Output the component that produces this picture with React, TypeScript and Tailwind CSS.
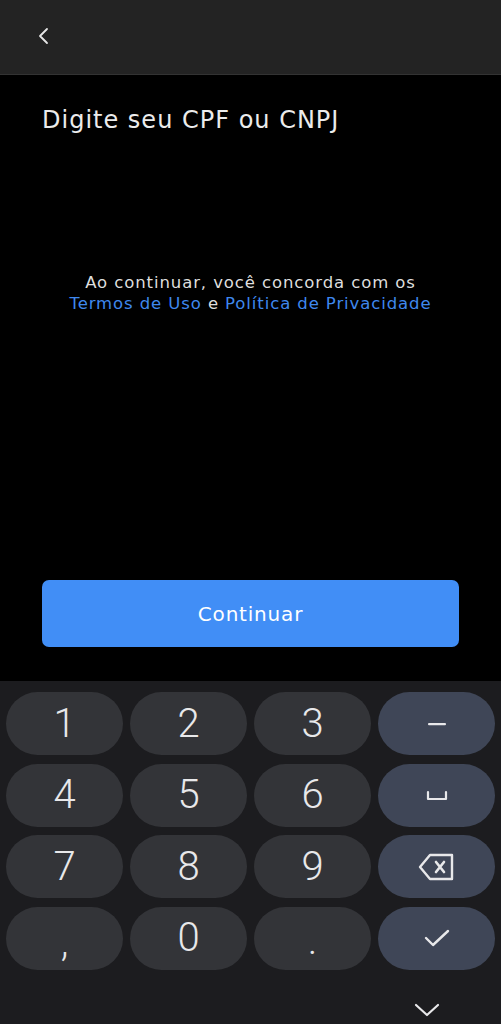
import React from "react";

const Key = ({ children, fn = false }: { children: React.ReactNode; fn?: boolean }) => (
  <div
    className={`h-[63px] rounded-full flex items-center justify-center text-[#e8e8ea] ${
      fn ? "bg-[#3f4657]" : "bg-[#333438]"
    }`}
    style={{ fontFamily: "Roboto, sans-serif" }}
  >
    {children}
  </div>
);

const D = ({ c, extra = "" }: { c: string; extra?: string }) => (
  <span className={`text-[40px] font-light leading-none ${extra}`}>{c}</span>
);

export default function App() {
  return (
    <div className="w-[501px] h-[1024px] flex flex-col bg-black overflow-hidden" style={{ fontFamily: '"DejaVu Sans", sans-serif' }}>
      <header className="h-[75px] shrink-0 bg-[#232323] border-b border-[#333333] flex items-center pl-[36px]">
        <svg width="16" height="20" viewBox="0 0 16 20" fill="none" className="-mt-[2px]">
          <path d="M11 3 L4 10 L11 17" stroke="#e6e6e6" strokeWidth="1.8" strokeLinecap="round" strokeLinejoin="round" />
        </svg>
      </header>
      <main className="flex-1 flex flex-col px-[42px]">
        <h1 className="mt-[29px] text-[24px] leading-[32px] text-[#ececec] tracking-[1px]">Digite seu CPF ou CNPJ</h1>
        <p className="mt-[136px] text-center text-[16.5px] leading-[21px] text-[#dedede] tracking-[0.9px] whitespace-nowrap -mx-[20px]">
          Ao continuar, você concorda com os
          <br />
          <span className="text-[#3f88ee]">Termos de Uso</span> e{" "}
          <span className="text-[#3f88ee]">Política de Privacidade</span>
        </p>
        <button className="mt-[266px] h-[67px] w-full rounded-[7px] bg-[#418ef6] text-white text-[20px] tracking-[0.8px]">
          Continuar
        </button>
      </main>
      <div className="h-[343px] shrink-0 bg-[#1c1c1f] px-[6px] pt-[11px] flex flex-col">
        <div className="grid grid-cols-4 gap-x-[7px] gap-y-[8.5px]">
          <Key><D c="1" /></Key>
          <Key><D c="2" /></Key>
          <Key><D c="3" /></Key>
          <Key fn>
            <svg width="20" height="4" viewBox="0 0 20 4"><rect x="1" y="1" width="18" height="2.2" rx="1" fill="#e8e8ea" /></svg>
          </Key>
          <Key><D c="4" /></Key>
          <Key><D c="5" /></Key>
          <Key><D c="6" /></Key>
          <Key fn>
            <svg width="22" height="12" viewBox="0 0 22 12" fill="none" className="mt-[2px]">
              <path d="M2 2 V9 H20 V2" stroke="#e8e8ea" strokeWidth="2.2" strokeLinejoin="round" strokeLinecap="round" />
            </svg>
          </Key>
          <Key><D c="7" /></Key>
          <Key><D c="8" /></Key>
          <Key><D c="9" /></Key>
          <Key fn>
            <svg width="38" height="30" viewBox="0 0 38 30" fill="none">
              <path d="M12 3 H34 V27 H12 L2 15 Z" stroke="#e8e8ea" strokeWidth="2.4" strokeLinejoin="round" />
              <path d="M18 10 L26 20 M26 10 L18 20" stroke="#e8e8ea" strokeWidth="2.6" strokeLinecap="round" />
            </svg>
          </Key>
          <Key><D c="," extra="mt-[10px]" /></Key>
          <Key><D c="0" /></Key>
          <Key><D c="." extra="mt-[6px]" /></Key>
          <Key fn>
            <svg width="28" height="22" viewBox="0 0 28 22" fill="none">
              <path d="M3 11 L10 18 L25 4" stroke="#e8e8ea" strokeWidth="2.4" strokeLinecap="round" strokeLinejoin="round" />
            </svg>
          </Key>
        </div>
        <div className="flex-1 flex items-center justify-end pr-[55px] pt-[26px]">
          <svg width="26" height="16" viewBox="0 0 26 16" fill="none">
            <path d="M2 3 L13 13 L24 3" stroke="#e8e8ea" strokeWidth="2.2" strokeLinecap="round" strokeLinejoin="round" />
          </svg>
        </div>
      </div>
    </div>
  );
}
